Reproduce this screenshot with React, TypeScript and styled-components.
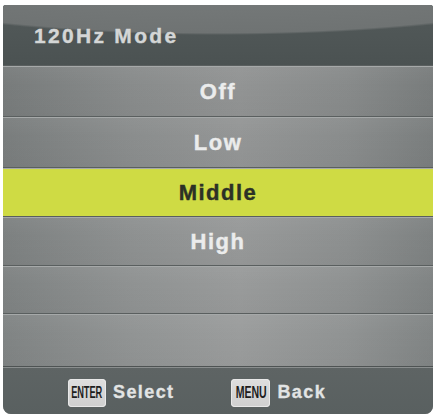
import React from "react";
import styled, { createGlobalStyle } from "styled-components";

const GlobalStyle = createGlobalStyle`
  html, body {
    margin: 0;
    padding: 0;
    background: #ffffff;
  }
  body {
    font-family: "Liberation Sans", Arial, sans-serif;
  }
`;

const Screen = styled.div`
  width: 434px;
  height: 418px;
  padding: 5px 1px 4px 3px;
  box-sizing: border-box;
  background: #ffffff;
`;

const Panel = styled.div`
  display: flex;
  flex-direction: column;
  height: 100%;
  border-radius: 3px 3px 8px 8px;
  overflow: hidden;
  background:
    linear-gradient(180deg, rgba(0, 0, 0, 0.06) 0%, rgba(255, 255, 255, 0.05) 100%),
    linear-gradient(90deg, #7c8080 0%, #8e9191 30%, #989a9a 55%, #8d9090 80%, #7d8181 100%);
`;

const Header = styled.div`
  display: flex;
  align-items: center;
  height: 60px;
  padding-left: 31px;
  background:
    radial-gradient(ellipse 420px 72px at 50% -42px, #7b7f7f 0%, #6f7373 97%, transparent 100%),
    linear-gradient(180deg, #535a5a 0%, #4b5252 100%);
`;

const Title = styled.span`
  font-size: 21px;
  font-weight: 700;
  letter-spacing: 2.3px;
  color: #d4d6d6;
  -webkit-text-stroke: 0.4px #d4d6d6;
  padding-top: 1px;
`;

const Row = styled.div<{ $active?: boolean; $h: number }>`
  display: flex;
  align-items: center;
  justify-content: center;
  height: ${(p) => p.$h}px;
  box-sizing: border-box;
  border-top: 1px solid #5a5f5f;
  box-shadow: inset 0 1px 0 #a6a9a9;
  background: ${(p) =>
    p.$active
      ? "#cfdb44"
      : "linear-gradient(180deg, rgba(255,255,255,0.05) 0%, rgba(255,255,255,0) 40%, rgba(0,0,0,0.03) 100%)"};
`;

const ItemText = styled.span<{ $active?: boolean }>`
  font-size: 22px;
  font-weight: 700;
  letter-spacing: 1.5px;
  color: ${(p) => (p.$active ? "#2c3126" : "#ebecec")};
  -webkit-text-stroke: 0.4px ${(p) => (p.$active ? "#2c3126" : "#ebecec")};
  padding-top: 2px;
`;

const Footer = styled.div`
  display: flex;
  align-items: center;
  flex: 1;
  gap: 57px;
  padding: 4px 0 0 65px;
  border-top: 1px solid #4e5353;
  box-shadow: inset 0 1px 0 #8a8e8e;
  background: linear-gradient(180deg, #5e6464 0%, #596060 100%);
`;

const Hint = styled.div`
  display: flex;
  align-items: center;
  gap: 7px;
`;

const Key = styled.div<{ $w: number; $scale: number }>`
  display: flex;
  align-items: center;
  justify-content: center;
  width: ${(p) => p.$w}px;
  height: 28px;
  border-radius: 4px;
  background: linear-gradient(180deg, #dedede 0%, #cfcfcf 100%);
  box-shadow: inset 0 0 0 1px #e8e8e8;
  overflow: hidden;

  span {
    display: inline-block;
    font-size: 16px;
    font-weight: 700;
    color: #1e1e1e;
    transform: scaleX(${(p) => p.$scale});
    white-space: nowrap;
    letter-spacing: -0.2px;
    padding-top: 1px;
  }
`;

const HintText = styled.span`
  font-size: 18px;
  font-weight: 700;
  letter-spacing: 1.4px;
  color: #e2e4e4;
  -webkit-text-stroke: 0.3px #e2e4e4;
`;

const items = [
  { label: "Off", h: 51 },
  { label: "Low", h: 51 },
  { label: "Middle", h: 49, active: true },
  { label: "High", h: 49 },
  { label: "", h: 48 },
  { label: "", h: 53 },
];

export default function App() {
  return (
    <Screen>
      <GlobalStyle />
      <Panel>
        <Header>
          <Title>120Hz Mode</Title>
        </Header>
        {items.map((it, i) => (
          <Row key={i} $h={it.h} $active={it.active}>
            {it.label && <ItemText $active={it.active}>{it.label}</ItemText>}
          </Row>
        ))}
        <Footer>
          <Hint>
            <Key $w={38} $scale={0.58}>
              <span>ENTER</span>
            </Key>
            <HintText>Select</HintText>
          </Hint>
          <Hint>
            <Key $w={39} $scale={0.66}>
              <span>MENU</span>
            </Key>
            <HintText>Back</HintText>
          </Hint>
        </Footer>
      </Panel>
    </Screen>
  );
}
